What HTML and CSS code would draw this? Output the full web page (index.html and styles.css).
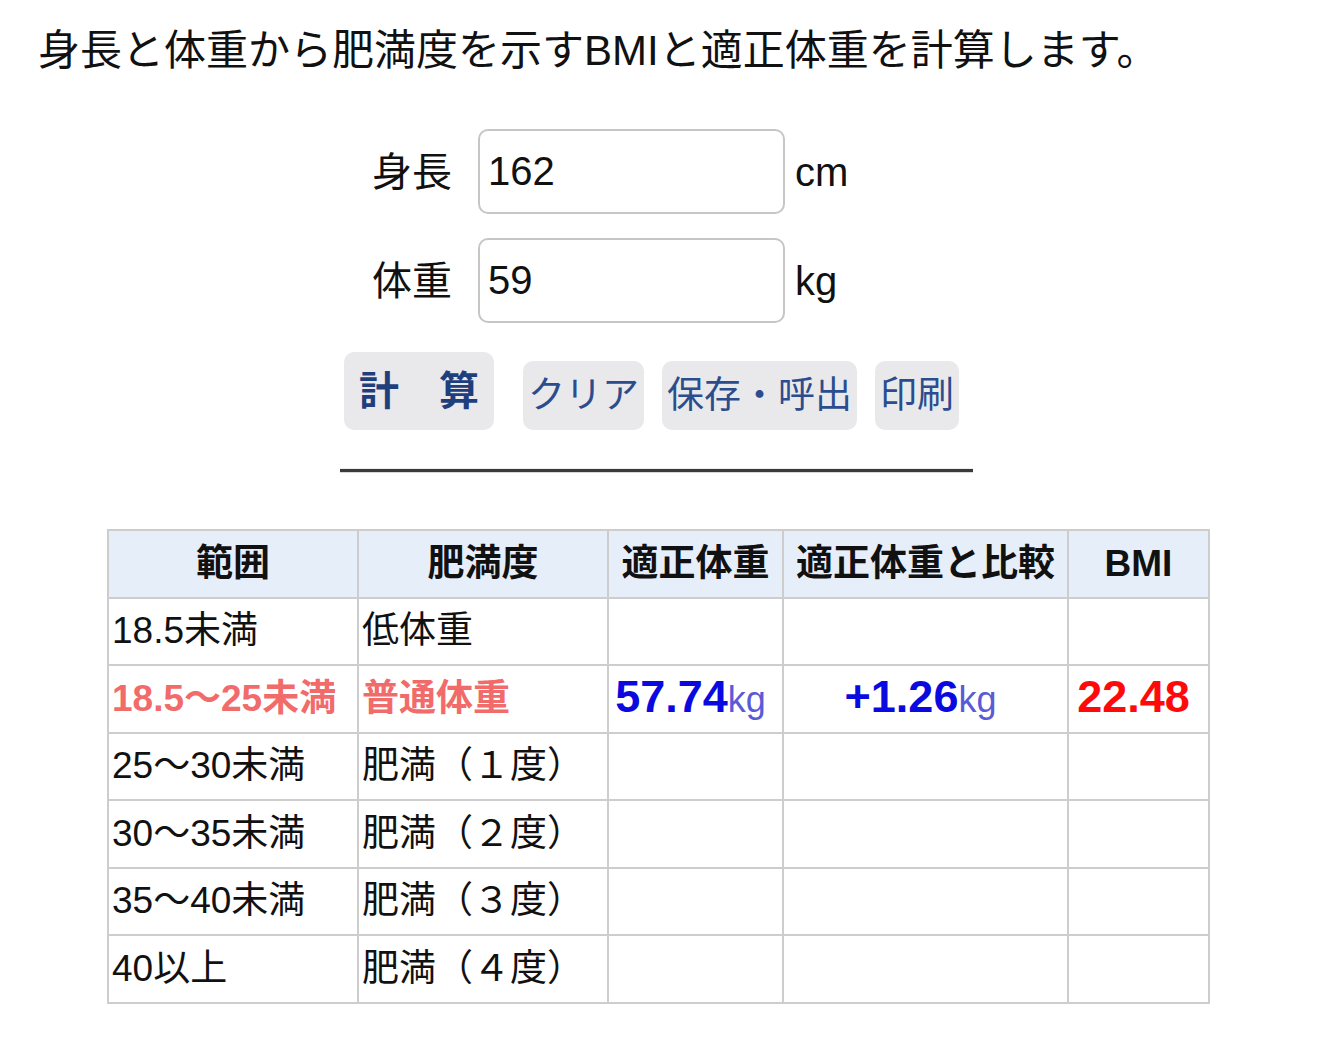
FILE: index.html
```html
<!DOCTYPE html>
<html lang="ja">
<head>
<meta charset="utf-8">
<title>BMI計算</title>
<link rel="stylesheet" href="styles.css">
</head>
<body>
<p class="intro">身長と体重から肥満度を示すBMIと適正体重を計算します。</p>

<div class="form">
  <label class="lbl" for="h">身長</label>
  <input class="field" id="h" type="text" value="162">
  <span class="unit">cm</span>
  <label class="lbl" for="w">体重</label>
  <input class="field" id="w" type="text" value="59">
  <span class="unit">kg</span>
</div>

<div class="buttons">
  <button class="btn btn-main" type="button">計　算</button>
  <button class="btn" type="button">クリア</button>
  <button class="btn" type="button">保存・呼出</button>
  <button class="btn" type="button">印刷</button>
</div>

<div class="rule"></div>

<table class="result">
  <colgroup>
    <col class="c1"><col class="c2"><col class="c3"><col class="c4"><col class="c5">
  </colgroup>
  <thead>
    <tr><th>範囲</th><th>肥満度</th><th>適正体重</th><th>適正体重と比較</th><th>BMI</th></tr>
  </thead>
  <tbody>
    <tr><td>18.5未満</td><td>低体重</td><td></td><td></td><td></td></tr>
    <tr class="hit">
      <td class="hl">18.5〜25未満</td>
      <td class="hl">普通体重</td>
      <td class="val"><span class="num">57.74</span><span class="kg">kg</span></td>
      <td class="val"><span class="num">+1.26</span><span class="kg">kg</span></td>
      <td class="val"><span class="bmi">22.48</span></td>
    </tr>
    <tr><td>25〜30未満</td><td>肥満（１度）</td><td></td><td></td><td></td></tr>
    <tr><td>30〜35未満</td><td>肥満（２度）</td><td></td><td></td><td></td></tr>
    <tr><td>35〜40未満</td><td>肥満（３度）</td><td></td><td></td><td></td></tr>
    <tr><td>40以上</td><td>肥満（４度）</td><td></td><td></td><td></td></tr>
  </tbody>
</table>
</body>
</html>
```

FILE: styles.css
```css
html, body {
  margin: 0;
  padding: 0;
  background: #ffffff;
}

body {
  font-family: "Liberation Sans", "Noto Sans CJK JP", sans-serif;
  color: #111111;
}

.intro {
  margin: 21px 0 0 0;
  padding-left: 38px;
  font-size: 42px;
  line-height: 60px;
}

.form {
  display: grid;
  grid-template-columns: 126px 307px 183px;
  grid-auto-rows: 85px;
  row-gap: 24px;
  justify-content: center;
  align-items: center;
  margin-top: 48px;
}

.lbl {
  font-size: 40px;
  line-height: 50px;
  text-align: right;
  padding-right: 26px;
}

.field {
  box-sizing: border-box;
  width: 307px;
  height: 85px;
  border: 2px solid #c6c6c6;
  border-radius: 10px;
  padding: 0 8px;
  font-family: "Liberation Sans", "Noto Sans CJK JP", sans-serif;
  font-size: 40px;
  color: #111111;
  background: #ffffff;
  outline: none;
}

.unit {
  font-size: 40px;
  line-height: 50px;
  padding-left: 10px;
}

.buttons {
  display: flex;
  justify-content: center;
  align-items: flex-end;
  margin-top: 29px;
  padding-right: 17px;
}

.btn {
  font-family: "Liberation Sans", "Noto Sans CJK JP", sans-serif;
  font-size: 37px;
  line-height: 59px;
  padding: 5px 5px 5px 5px;
  margin-left: 18px;
  border: none;
  border-radius: 10px;
  background: #e9e9ec;
  color: #2c4d8d;
}

.btn-main {
  font-size: 40px;
  font-weight: bold;
  line-height: 68px;
  padding: 5px 15px;
  margin-left: 0;
  margin-right: 11px;
  color: #1f3f7c;
}

.rule {
  width: 633px;
  margin: 39px 0 0 340px;
  border-top: 3px solid #3a3a3a;
  box-shadow: 0 1px 0 #d8d8d8, 0 -1px 0 #ececec;
}

.result {
  margin: 57px 0 0 107px;
  width: 1101px;
  border-collapse: collapse;
  table-layout: fixed;
  border: 2px solid #cdcdcd;
}

.c1 { width: 250px; }
.c2 { width: 250px; }
.c3 { width: 175px; }
.c4 { width: 285px; }
.c5 { width: 141px; }

.result th,
.result td {
  border: 2px solid #cdcdcd;
  height: 65.5px;
  padding: 0 3px;
  font-size: 37px;
  line-height: 46px;
  white-space: nowrap;
  overflow: hidden;
}

.result th {
  background: #e6eefa;
  font-weight: bold;
  text-align: center;
}

.result td {
  text-align: left;
}

.result td.hl {
  color: #f26b6b;
  font-weight: bold;
}

.result td.val {
  text-align: center;
  padding: 0 10px 0 0;
}

.num {
  font-size: 45px;
  font-weight: bold;
  color: #0a0ae0;
}

.kg {
  font-size: 36px;
  color: #5a5ad8;
}

.bmi {
  font-size: 45px;
  font-weight: bold;
  color: #ff0a0a;
}
```
